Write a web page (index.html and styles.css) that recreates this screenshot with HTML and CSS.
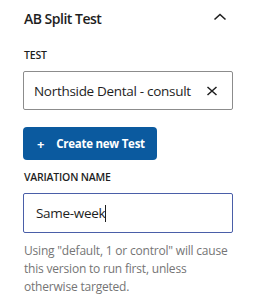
FILE: index.html
```html
<!DOCTYPE html>
<html lang="en">
<head>
    <meta charset="UTF-8">
    <title>AB Split Test</title>
    <link rel="stylesheet" href="styles.css">
</head>
<body>
    <div class="panel">
        <div class="panel-header">
            <h2>AB Split Test</h2>
            <svg class="chevron" width="24" height="24" viewBox="0 0 24 24"><path d="M6.5 13.5 12 8.5l5.5 5" fill="none" stroke="#1e1e1e" stroke-width="1.6"/></svg>
        </div>

        <div class="field">
            <label>Test</label>
            <div class="select-box">
                <span>Northside Dental - consult</span>
                <svg class="clear" width="12" height="12" viewBox="0 0 12 12"><path d="M1.5 2 10.5 10M10.5 2 1.5 10" stroke="#1e1e1e" stroke-width="1.5"/></svg>
            </div>
        </div>

        <button class="btn-primary"><span class="plus">+</span>Create new Test</button>

        <div class="field">
            <label>Variation name</label>
            <div class="text-input focused">Same-week<span class="caret"></span></div>
            <p class="help">Using "default, 1 or control" will cause this version to run first, unless otherwise targeted.</p>
        </div>
    </div>
</body>
</html>
```

FILE: styles.css
```css
body {
    margin: 0;
    font-family: "Open Sans", "Noto Sans", sans-serif;
    background: #fff;
    color: #1e1e1e;
}

.panel {
    padding: 4px 32px 0 23px;
}

.panel-header {
    display: flex;
    justify-content: space-between;
    align-items: center;
    height: 28px;
}

.panel-header h2 {
    margin: 0 0 0 1px;
    font-size: 14px;
    font-weight: 600;
    letter-spacing: -0.5px;
}

.chevron {
    margin-right: 1px;
}

.field label {
    display: block;
    margin: 16px 0 9px 1px;
    font-size: 10.5px;
    font-weight: 600;
    text-transform: uppercase;
    letter-spacing: -0.2px;
}

.select-box,
.text-input {
    display: flex;
    align-items: center;
    box-sizing: border-box;
    width: 210px;
    height: 39px;
    border: 1px solid #8c8c8c;
    border-radius: 2px;
    font-size: 13.5px;
    letter-spacing: -0.3px;
}

.select-box {
    justify-content: space-between;
    padding: 0 14px 0 10px;
}

.btn-primary {
    display: flex;
    align-items: center;
    margin-top: 17px;
    height: 33px;
    padding: 0 12px 0 14px;
    border: none;
    border-radius: 4px;
    background: #0b5a9f;
    color: #fff;
    font-family: inherit;
    font-size: 11.5px;
    font-weight: 700;
    letter-spacing: -0.25px;
}

.btn-primary .plus {
    margin-right: 12px;
    font-size: 13px;
}

.btn-primary + .field label {
    margin-top: 10px;
}

.text-input {
    height: 40px;
    padding: 0 12px;
}

.text-input.focused {
    border: 1.5px solid #4a5ea8;
}

.caret {
    display: inline-block;
    width: 1px;
    height: 17px;
    background: #1e1e1e;
}

.help {
    margin: 9px 0 0 1px;
    font-size: 12px;
    line-height: 18px;
    color: #757575;
    letter-spacing: -0.2px;
}
```
